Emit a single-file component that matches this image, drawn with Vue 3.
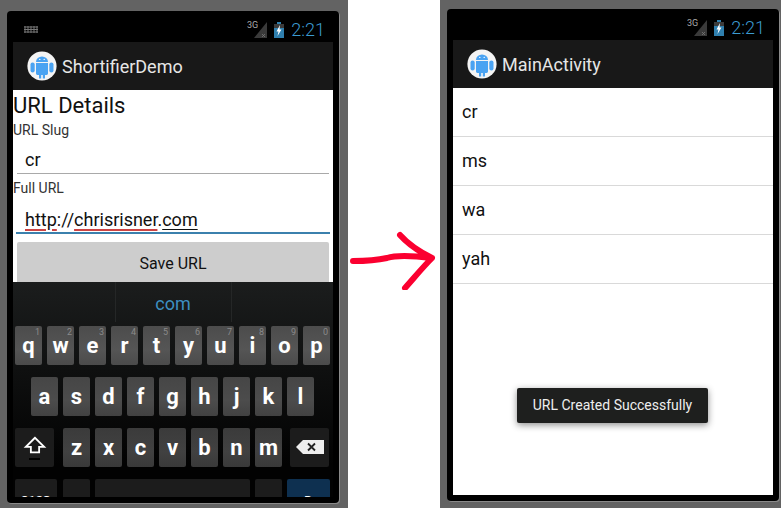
<template>
  <div class="page">
    <div class="phone phone-left">
      <div class="status-bar">
        <svg class="kbd-icon" viewBox="0 0 14 7" width="14" height="7">
          <path d="M0 1h14M0 3.5h14M0 6h14M1 0v7M4 0v7M7 0v7M10 0v7M13 0v7" stroke="#777" stroke-width="1" fill="none" />
        </svg>
        <span class="status-right">
          <span class="net">3G</span>
          <svg class="signal" viewBox="0 0 13 16" width="13" height="16"><path d="M13 0v16H0z" fill="#3a3a3a" /><path d="M8 12l3 3M11 12l-3 3" stroke="#777" stroke-width="0.8" /></svg>
          <svg class="battery" viewBox="0 0 10 16" width="10" height="16"><path d="M3 0h4v2h3v14H0V2h3z" fill="#2f7fae" /><path d="M0 2h10v4H0z" fill="#3b3b3b" /><path d="M6 3L2.5 9.5h2L3.5 14 7.5 7.5h-2z" fill="#fff" /></svg>
          <span class="clock">2:21</span>
        </span>
      </div>
      <div class="action-bar">
        <svg class="app-icon" viewBox="0 0 30 30" width="30" height="30">
          <circle cx="15" cy="15" r="14.6" fill="#f4f4f4" />
          <path d="M9 11a6 5.6 0 0 1 12 0z" fill="#4aa3f2" />
          <path d="M9 12h12v10.5a1.4 1.4 0 0 1-1.4 1.4H18v3.6h-2.2v-3.6h-1.6v3.6H12v-3.6h-1.6A1.4 1.4 0 0 1 9 22.500z" fill="#4aa3f2" />
          <rect x="3.500" y="11.500" width="4.200" height="10" rx="2.100" fill="#4aa3f2" />
          <rect x="22.300" y="11.500" width="4.200" height="10" rx="2.100" fill="#4aa3f2" />
          <circle cx="12.800" cy="8.400" r="0.700" fill="#fff" />
          <circle cx="17.200" cy="8.400" r="0.700" fill="#fff" />
        </svg>
        <span class="app-title">ShortifierDemo</span>
      </div>
      <div class="form">
        <h1 class="form-title">URL Details</h1>
        <label class="field-label">URL Slug</label>
        <div class="edit">cr</div>
        <label class="field-label second">Full URL</label>
        <div class="edit focused">
          <span class="typo">http</span>://<span class="typo">chrisrisner</span>.<span class="word">com</span>
        </div>
        <button class="save-btn">Save URL</button>
      </div>
      <div class="keyboard">
        <div class="candidates">
          <span class="candidate">com</span>
        </div>
        <div class="key-row row-1">
          <div v-for="k in topRow" :key="k.label" class="key">
            {{ k.label }}<span class="hint">{{ k.hint }}</span>
          </div>
        </div>
        <div class="key-row row-2">
          <div v-for="k in midRow" :key="k" class="key">{{ k }}</div>
        </div>
        <div class="key-row row-3">
          <div class="key dark shift">
            <svg viewBox="0 0 24 24" width="24" height="22">
              <path d="M12 3L2 13h5.500v6h9v-6H22z" fill="none" stroke="#fff" stroke-width="2" />
            </svg>
            <span class="shift-bar"></span>
          </div>
          <div v-for="k in lowRow" :key="k" class="key">{{ k }}</div>
          <div class="key dark del">
            <svg viewBox="0 0 28 14" width="28" height="14">
              <path d="M7 0h21v14H7L0 7z" fill="#eee" />
              <path d="M12 3.500l7 7M19 3.500l-7 7" stroke="#222" stroke-width="1.800" />
            </svg>
          </div>
        </div>
        <div class="key-row row-4">
          <div class="key dark sym">?123</div>
          <div class="key dark"></div>
          <div class="key dark space"></div>
          <div class="key dark"></div>
          <div class="key done">D</div>
        </div>
      </div>
    </div>

    <div class="gutter">
      <svg class="arrow" viewBox="0 0 92 60" width="92" height="60">
        <path d="M5 31C18 31 30 30 39 28C48 25 60 25 84 28M52 5C60 14 72 22 84 28C74 38 66 48 57 58" fill="none" stroke="#fb0030" stroke-width="6" stroke-linecap="round" stroke-linejoin="round" />
      </svg>
    </div>

    <div class="phone phone-right">
      <div class="status-bar">
        <span class="status-right">
          <span class="net">3G</span>
          <svg class="signal" viewBox="0 0 13 16" width="13" height="16"><path d="M13 0v16H0z" fill="#3a3a3a" /><path d="M8 12l3 3M11 12l-3 3" stroke="#777" stroke-width="0.8" /></svg>
          <svg class="battery" viewBox="0 0 10 16" width="10" height="16"><path d="M3 0h4v2h3v14H0V2h3z" fill="#2f7fae" /><path d="M0 2h10v4H0z" fill="#3b3b3b" /><path d="M6 3L2.5 9.5h2L3.5 14 7.5 7.5h-2z" fill="#fff" /></svg>
          <span class="clock">2:21</span>
        </span>
      </div>
      <div class="action-bar">
        <svg class="app-icon" viewBox="0 0 30 30" width="30" height="30">
          <circle cx="15" cy="15" r="14.6" fill="#f4f4f4" />
          <path d="M9 11a6 5.6 0 0 1 12 0z" fill="#4aa3f2" />
          <path d="M9 12h12v10.5a1.4 1.4 0 0 1-1.4 1.4H18v3.6h-2.2v-3.6h-1.6v3.6H12v-3.6h-1.6A1.4 1.4 0 0 1 9 22.500z" fill="#4aa3f2" />
          <rect x="3.500" y="11.500" width="4.200" height="10" rx="2.100" fill="#4aa3f2" />
          <rect x="22.300" y="11.500" width="4.200" height="10" rx="2.100" fill="#4aa3f2" />
          <circle cx="12.800" cy="8.400" r="0.700" fill="#fff" />
          <circle cx="17.200" cy="8.400" r="0.700" fill="#fff" />
        </svg>
        <span class="app-title">MainActivity</span>
      </div>
      <div class="list-screen">
        <div v-for="slug in slugs" :key="slug" class="list-row">{{ slug }}</div>
        <div class="toast">URL Created Successfully</div>
      </div>
    </div>
  </div>
</template>

<script setup>
const hints = ['1', '2', '3', '4', '5', '6', '7', '8', '9', '0']
const topRow = 'qwertyuiop'.split('').map((label, i) => ({ label, hint: hints[i] }))
const midRow = 'asdfghjkl'.split('')
const lowRow = 'zxcvbnm'.split('')
const slugs = ['cr', 'ms', 'wa', 'yah']
</script>

<style>
html, body {
  margin: 0;
  background: #636363;
}
</style>

<style scoped>
.page {
  width: 781px;
  height: 508px;
  background: #636363;
  display: flex;
  font-family: Roboto, "Liberation Sans", sans-serif;
  overflow: hidden;
  box-sizing: border-box;
  padding-left: 7px;
}

.phone {
  width: 332px;
  background: #000;
  border-radius: 4px;
  padding: 0 6px;
  box-sizing: border-box;
  display: flex;
  flex-direction: column;
  box-shadow: 1px 1px 0 #8a8a8a;
  flex-shrink: 0;
}

.phone-left {
  margin-top: 11px;
  height: 492px;
  padding-bottom: 6px;
}

.phone-right {
  margin-top: 9px;
  height: 492px;
  padding-bottom: 6px;
}

.status-bar {
  height: 31px;
  display: flex;
  align-items: center;
  padding: 0 8px 0 11px;
  flex-shrink: 0;
}

.kbd-icon {
  margin-top: 5px;
}

.status-right {
  margin-left: auto;
  display: flex;
  align-items: center;
  padding-top: 6px;
}

.net {
  font-size: 9px;
  color: #aaa;
  align-self: flex-start;
  margin-right: -4px;
  line-height: 10px;
}

.battery {
  margin-left: 7px;
}

.clock {
  font-size: 18px;
  font-weight: 300;
  color: #3c9bd0;
  margin-left: 7px;
  line-height: 20px;
}

.action-bar {
  height: 48px;
  background: #181818;
  display: flex;
  align-items: center;
  padding-left: 14px;
  flex-shrink: 0;
}

.app-title {
  font-size: 18px;
  color: #e6e6e6;
  margin-left: 5px;
}

.form {
  height: 192px;
  background: #fff;
  overflow: hidden;
  flex-shrink: 0;
  display: flex;
  flex-direction: column;
  color: #111;
}

.form-title {
  margin: 2px 0 0;
  font-size: 22px;
  font-weight: 400;
  line-height: 28px;
}

.field-label {
  font-size: 14px;
  line-height: 18px;
  color: #333;
  margin-top: 1px;
}

.field-label.second {
  margin-top: 5px;
}

.edit {
  margin: 0 4px;
  height: 35px;
  box-sizing: border-box;
  padding: 9px 8px 0;
  font-size: 18px;
  line-height: 24px;
  border-bottom: 1px solid #a9a9a9;
  flex-shrink: 0;
}

.edit.focused {
  margin: 0 3px;
  height: 37px;
  padding: 11px 9px 0;
  border-bottom: 2px solid #3b80ad;
}

.typo {
  text-decoration: underline #c44;
  text-decoration-thickness: 2px;
  text-underline-offset: 3px;
}

.word {
  text-decoration: underline #111;
  text-decoration-thickness: 1px;
  text-underline-offset: 3px;
}

.save-btn {
  margin: 8px 4px 0;
  height: 42px;
  flex-shrink: 0;
  border: 0;
  border-radius: 2px;
  background: #cdcdcd;
  color: #111;
  font-family: inherit;
  font-size: 16px;
  padding: 0;
}

.keyboard {
  flex: 1;
  min-height: 0;
  overflow: hidden;
  background: linear-gradient(#1b1d1d, #020202 85%);
  margin-right: 0;
  display: flex;
  flex-direction: column;
}

.candidates {
  height: 44px;
  flex-shrink: 0;
  display: flex;
  justify-content: center;
}

.candidate {
  width: 115px;
  height: 40px;
  box-sizing: content-box;
  border-left: 1px solid #252727;
  border-right: 1px solid #252727;
  text-align: center;
  font-size: 18px;
  line-height: 44px;
  color: #3d8fc0;
}

.key-row {
  display: flex;
  gap: 5px;
  height: 39px;
  flex-shrink: 0;
  margin-bottom: 12px;
  padding-left: 2px;
}

.row-2 {
  padding-left: 18px;
}

.key {
  width: 27px;
  height: 39px;
  border-radius: 2px;
  position: relative;
  display: flex;
  align-items: center;
  justify-content: center;
  color: #fff;
  font-size: 22px;
  font-weight: 700;
  padding-bottom: 1px;
  box-sizing: border-box;
  flex-shrink: 0;
}

.row-1 .key {
  background: linear-gradient(#4c4c4c, #555 60%, #4b4b4b);
}

.row-2 .key {
  background: linear-gradient(#464646, #4c4c4c 60%, #424242);
}

.row-3 .key {
  background: linear-gradient(#3b3b3b, #414141 60%, #393939);
}

.hint {
  position: absolute;
  top: 1px;
  right: 2px;
  font-size: 9px;
  line-height: 11px;
  font-weight: 400;
  color: #8a8a8a;
}

.key.dark,
.row-3 .key.dark {
  background: #1c1c1c;
}

.key.shift {
  width: 39px;
  margin-right: 4px;
  flex-direction: column;
  padding-bottom: 0;
}

.shift-bar {
  width: 11px;
  height: 2px;
  background: #000;
  margin-top: 1px;
}

.key.del {
  width: 39px;
  margin-left: 3px;
}

.sym {
  width: 42px;
  font-size: 13px;
  padding-top: 14px;
  align-items: flex-start;
}

.key.sym {
  width: 42px;
  margin-right: 1px;
}

.key.space {
  width: 155px;
}

.key.done {
  width: 43px;
  background: #0e3050;
  font-size: 13px;
  align-items: flex-start;
  padding-top: 14px;
}

.gutter {
  width: 101px;
  margin-left: 9px;
  margin-right: 7px;
  background: #fff;
  flex-shrink: 0;
  padding-top: 230px;
  box-sizing: border-box;
}

.gutter {
  width: 92px;
}

.arrow {
  display: block;
}

.list-screen {
  flex: 1;
  background: #fff;
  position: relative;
  color: #111;
}

.list-row {
  height: 49px;
  box-sizing: border-box;
  border-bottom: 1px solid #d9d9d9;
  font-size: 18px;
  padding: 0 0 0 9px;
  line-height: 48px;
}

.toast {
  position: absolute;
  left: 64px;
  top: 300px;
  width: 191px;
  height: 35px;
  background: #1e1f1e;
  border-radius: 2px;
  box-shadow: 0 2px 7px rgba(0, 0, 0, 0.45);
  color: #eee;
  font-size: 14px;
  line-height: 35px;
  text-align: center;
}
</style>
